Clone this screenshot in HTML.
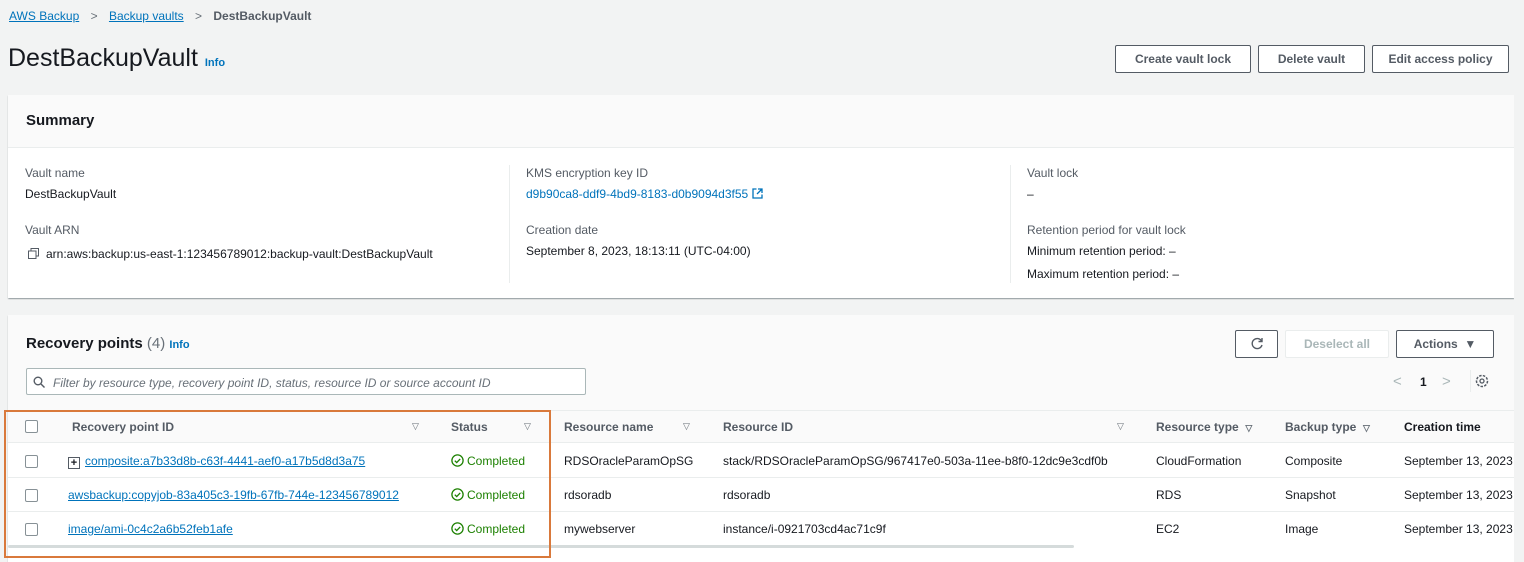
<!DOCTYPE html>
<html><head><meta charset="utf-8"><style>
*{box-sizing:border-box;margin:0;padding:0}
html,body{width:1524px;height:562px;overflow:hidden}
body{background:#f2f3f3;font-family:"Liberation Sans",sans-serif;color:#16191f;font-size:12px;position:relative}
.a{position:absolute;white-space:nowrap}
.link{color:#0073bb;text-decoration:underline}
.lbl{color:#545b64;font-size:12px}
.btn{position:absolute;height:28px;border:1px solid #545b64;border-radius:2px;background:#fff;font-weight:bold;color:#545b64;font-size:12px;display:flex;align-items:center;justify-content:center}
.card{position:absolute;background:#fff;box-shadow:0 1px 1px rgba(0,28,36,.3),1px 1px 1px rgba(0,28,36,.15)}
.cb{position:absolute;width:13px;height:13px;border:1px solid #879196;border-radius:2px;background:#fff}
.ok{color:#1d8102}
.ok svg{vertical-align:-2px;margin-right:3px}
.th{font-weight:bold;color:#545b64}
.tri{color:#687078;font-size:9px}
</style></head><body>
<div class="a" style="left:9px;top:9px;font-size:12px"><span class="link">AWS Backup</span> <span style="color:#687078;margin:0 8px">&gt;</span> <span class="link">Backup vaults</span> <span style="color:#687078;margin:0 8px">&gt;</span> <b style="color:#545b64">DestBackupVault</b></div>
<div class="a" style="left:8px;top:44px;font-size:25px">DestBackupVault <span style="font-size:11px;color:#0073bb;font-weight:bold">Info</span></div>
<div class="btn" style="left:1115px;top:45px;width:136px">Create vault lock</div>
<div class="btn" style="left:1258px;top:45px;width:107px">Delete vault</div>
<div class="btn" style="left:1372px;top:45px;width:137px">Edit access policy</div>

<div class="card" style="left:8px;top:95px;width:1506px;height:203px">
<div style="height:53px;background:#fafafa;border-bottom:1px solid #eaeded"></div>
<div class="a" style="left:18px;top:17px;font-size:15px;font-weight:bold">Summary</div>
<div class="a lbl" style="left:17px;top:71px">Vault name</div>
<div class="a" style="left:17px;top:92px">DestBackupVault</div>
<div class="a lbl" style="left:17px;top:128px">Vault ARN</div>
<div class="a" style="left:20px;top:152px"><svg width="11" height="11" style="vertical-align:-1px;margin-right:7px"><rect x="3" y=".5" width="7.5" height="7.5" fill="none" stroke="#545b64"/><rect x=".5" y="3" width="7.5" height="7.5" fill="#fff" stroke="#545b64"/></svg>arn:aws:backup:us-east-1:123456789012:backup-vault:DestBackupVault</div>
<div style="position:absolute;left:501px;top:70px;width:1px;height:118px;background:#eaeded"></div>
<div style="position:absolute;left:1002px;top:70px;width:1px;height:118px;background:#eaeded"></div>
<div class="a lbl" style="left:518px;top:71px">KMS encryption key ID</div>
<div class="a" style="left:518px;top:92px;color:#0073bb">d9b90ca8-ddf9-4bd9-8183-d0b9094d3f55 <svg width="11" height="11" style="vertical-align:-1px"><path d="M4.5 1H1v9h9V6.5M6 1h4v4M10 1L5 6" fill="none" stroke="#0073bb" stroke-width="1.3"/></svg></div>
<div class="a lbl" style="left:518px;top:128px">Creation date</div>
<div class="a" style="left:518px;top:149px">September 8, 2023, 18:13:11 (UTC-04:00)</div>
<div class="a lbl" style="left:1019px;top:71px">Vault lock</div>
<div class="a" style="left:1019px;top:92px">–</div>
<div class="a lbl" style="left:1019px;top:128px">Retention period for vault lock</div>
<div class="a" style="left:1019px;top:149px">Minimum retention period: –</div>
<div class="a" style="left:1019px;top:172px">Maximum retention period: –</div>
</div>

<div class="card" style="left:8px;top:315px;width:1506px;height:247px">
<div style="position:absolute;left:0;top:0;width:100%;height:95px;background:#fafafa"></div>
<div class="a" style="left:18px;top:20px;font-size:15px;font-weight:bold">Recovery points <span style="font-weight:normal;color:#687078">(4)</span> <span style="font-size:11px;color:#0073bb">Info</span></div>
<div style="position:absolute;left:18px;top:53px;width:560px;height:27px;border:1px solid #aab7b8;border-radius:2px;background:#fff"></div>
<div class="a" style="left:25px;top:61px"><svg width="12" height="12"><circle cx="5" cy="5" r="3.8" fill="none" stroke="#545b64" stroke-width="1.4"/><path d="M8 8l3.5 3.5" stroke="#545b64" stroke-width="1.4"/></svg></div>
<div class="a" style="left:45px;top:61px;font-style:italic;color:#687078">Filter by resource type, recovery point ID, status, resource ID or source account ID</div>
<div class="btn" style="left:1227px;top:15px;width:43px"><svg width="14" height="14"><path d="M11.5 4A5 5 0 1 0 12 8" fill="none" stroke="#545b64" stroke-width="1.4"/><path d="M12 1v3.5H8.5" fill="none" stroke="#545b64" stroke-width="1.4"/></svg></div>
<div class="btn" style="left:1277px;top:15px;width:104px;border-color:#eaeded;color:#aab7b8">Deselect all</div>
<div class="btn" style="left:1388px;top:15px;width:98px">Actions&nbsp;&nbsp;▼</div>
<div class="a" style="left:1385px;top:58px;color:#aab7b8;font-size:15px">&lt;</div>
<div class="a" style="left:1412px;top:60px;font-weight:bold">1</div>
<div class="a" style="left:1434px;top:58px;color:#aab7b8;font-size:15px">&gt;</div>
<div style="position:absolute;left:1462px;top:55px;width:1px;height:22px;background:#eaeded"></div>
<div class="a" style="left:1467px;top:59px"><svg width="14" height="14"><circle cx="7" cy="7" r="5.5" fill="none" stroke="#545b64" stroke-width="1.5" stroke-dasharray="2.5 1.3"/><circle cx="7" cy="7" r="2" fill="none" stroke="#545b64" stroke-width="1.3"/></svg></div>
<div style="position:absolute;left:0;top:95px;width:100%;height:33px;background:#fafafa;border-top:1px solid #eaeded;border-bottom:1px solid #eaeded"></div>
<div style="position:absolute;left:0;top:162px;width:100%;height:1px;background:#eaeded"></div>
<div style="position:absolute;left:0;top:196px;width:100%;height:1px;background:#eaeded"></div>
<div style="position:absolute;left:0;top:230px;width:1066px;height:3px;background:#d5dbdb;border-radius:2px"></div>
</div>

<div class="cb" style="left:25px;top:420px"></div>
<div class="a th" style="left:72px;top:420px">Recovery point ID</div><div class="a tri" style="left:412px;top:421px">▽</div>
<div class="a th" style="left:451px;top:420px">Status</div><div class="a tri" style="left:524px;top:421px">▽</div>
<div class="a th" style="left:564px;top:420px">Resource name</div><div class="a tri" style="left:683px;top:421px">▽</div>
<div class="a th" style="left:723px;top:420px">Resource ID</div><div class="a tri" style="left:1117px;top:421px">▽</div>
<div class="a th" style="left:1156px;top:420px">Resource type&nbsp; <span class="tri">▽</span></div>
<div class="a th" style="left:1285px;top:420px">Backup type&nbsp; <span class="tri">▽</span></div>
<div class="a th" style="left:1404px;top:420px;color:#16191f">Creation time</div>

<div class="cb" style="left:25px;top:455px"></div>
<div class="a" style="left:68px;top:454px"><span style="display:inline-block;width:12px;height:12px;border:1px solid #545b64;font-size:11px;line-height:10px;text-align:center;font-weight:bold;margin-right:5px;vertical-align:-1px">+</span><span class="link">composite:a7b33d8b-c63f-4441-aef0-a17b5d8d3a75</span></div>
<div class="cb" style="left:25px;top:489px"></div>
<div class="a link" style="left:68px;top:488px">awsbackup:copyjob-83a405c3-19fb-67fb-744e-123456789012</div>
<div class="cb" style="left:25px;top:523px"></div>
<div class="a link" style="left:68px;top:522px">image/ami-0c4c2a6b52feb1afe</div>

<div class="a ok" style="left:451px;top:454px"><svg width="13" height="13"><circle cx="6.5" cy="6.5" r="5.6" fill="none" stroke="#1d8102" stroke-width="1.3"/><path d="M3.8 6.7l1.9 1.9 3.5-3.7" fill="none" stroke="#1d8102" stroke-width="1.3"/></svg>Completed</div>
<div class="a ok" style="left:451px;top:488px"><svg width="13" height="13"><circle cx="6.5" cy="6.5" r="5.6" fill="none" stroke="#1d8102" stroke-width="1.3"/><path d="M3.8 6.7l1.9 1.9 3.5-3.7" fill="none" stroke="#1d8102" stroke-width="1.3"/></svg>Completed</div>
<div class="a ok" style="left:451px;top:522px"><svg width="13" height="13"><circle cx="6.5" cy="6.5" r="5.6" fill="none" stroke="#1d8102" stroke-width="1.3"/><path d="M3.8 6.7l1.9 1.9 3.5-3.7" fill="none" stroke="#1d8102" stroke-width="1.3"/></svg>Completed</div>

<div class="a" style="left:564px;top:454px">RDSOracleParamOpSG</div>
<div class="a" style="left:723px;top:454px">stack/RDSOracleParamOpSG/967417e0-503a-11ee-b8f0-12dc9e3cdf0b</div>
<div class="a" style="left:1156px;top:454px">CloudFormation</div>
<div class="a" style="left:1285px;top:454px">Composite</div>
<div class="a" style="left:1404px;top:454px">September 13, 2023</div>
<div class="a" style="left:564px;top:488px">rdsoradb</div>
<div class="a" style="left:723px;top:488px">rdsoradb</div>
<div class="a" style="left:1156px;top:488px">RDS</div>
<div class="a" style="left:1285px;top:488px">Snapshot</div>
<div class="a" style="left:1404px;top:488px">September 13, 2023</div>
<div class="a" style="left:564px;top:522px">mywebserver</div>
<div class="a" style="left:723px;top:522px">instance/i-0921703cd4ac71c9f</div>
<div class="a" style="left:1156px;top:522px">EC2</div>
<div class="a" style="left:1285px;top:522px">Image</div>
<div class="a" style="left:1404px;top:522px">September 13, 2023</div>
<div style="position:absolute;left:1514px;top:0;width:10px;height:562px;background:#f2f3f3"></div>

<div style="position:absolute;left:4px;top:410px;width:547px;height:148px;border:2px solid #d9793b"></div>
</body></html>
